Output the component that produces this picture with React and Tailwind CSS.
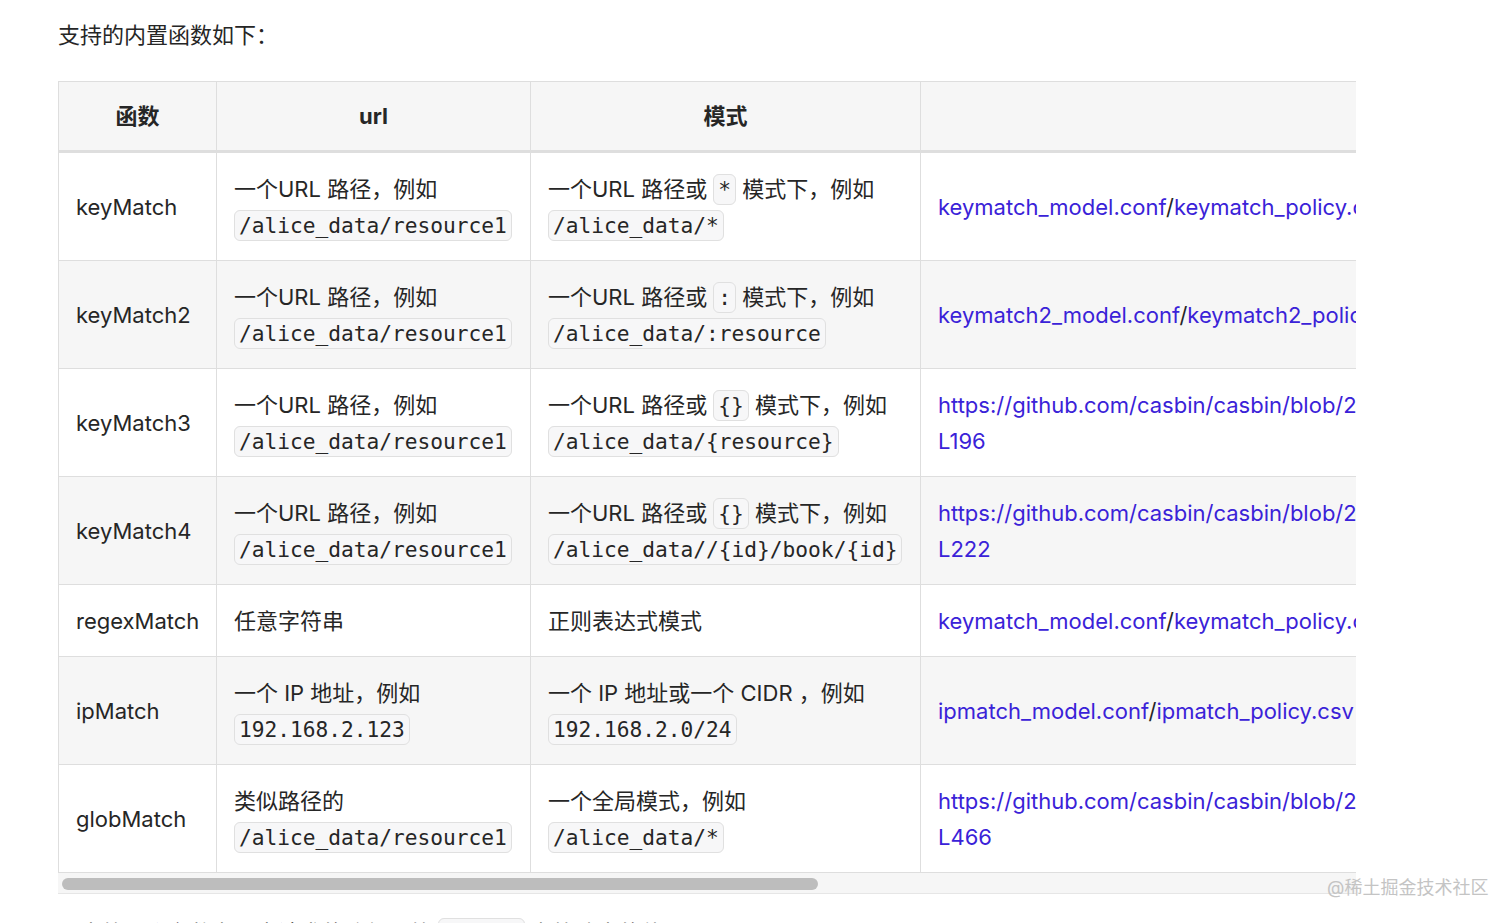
import React from 'react';

const body = { fontFamily: 'Inter, "Noto Sans CJK SC", sans-serif' };
const mono = { fontFamily: '"DejaVu Sans Mono", "Liberation Mono", monospace' };

const Code = ({ children }) => (
  <code
    style={mono}
    className="rounded-[6px] border border-[#e0e0e0] bg-[#f7f7f8] px-[4px] py-[2px] text-[21.2px] leading-none text-[#262626]"
  >
    {children}
  </code>
);

const A = ({ children }) => <a className="text-[#3a22d8]">{children}</a>;

const Pair = ({ a, b }) => (
  <span className="whitespace-nowrap">
    <A>{a}</A>/<A>{b}</A>
  </span>
);

const Gh = ({ line }) => (
  <span className="whitespace-nowrap">
    <A>https://github.com/casbin/casbin/blob/277c1a2b85698272f764d71a94d2595a8d425915/util/builtin_operators.go#</A>
    <br />
    <A>{line}</A>
  </span>
);

const rows = [
  {
    name: 'keyMatch',
    url: <>一个URL 路径，例如<br /><Code>/alice_data/resource1</Code></>,
    mode: <>一个URL 路径或 <Code>*</Code> 模式下，例如<br /><Code>/alice_data/*</Code></>,
    demo: <Pair a="keymatch_model.conf" b="keymatch_policy.csv" />,
  },
  {
    name: 'keyMatch2',
    url: <>一个URL 路径，例如<br /><Code>/alice_data/resource1</Code></>,
    mode: <>一个URL 路径或 <Code>:</Code> 模式下，例如<br /><Code>/alice_data/:resource</Code></>,
    demo: <Pair a="keymatch2_model.conf" b="keymatch2_policy.csv" />,
  },
  {
    name: 'keyMatch3',
    url: <>一个URL 路径，例如<br /><Code>/alice_data/resource1</Code></>,
    mode: <>一个URL 路径或 <Code>{'{}'}</Code> 模式下，例如<br /><Code>{'/alice_data/{resource}'}</Code></>,
    demo: <Gh line="L196" />,
  },
  {
    name: 'keyMatch4',
    url: <>一个URL 路径，例如<br /><Code>/alice_data/resource1</Code></>,
    mode: <>一个URL 路径或 <Code>{'{}'}</Code> 模式下，例如<br /><Code>{'/alice_data//{id}/book/{id}'}</Code></>,
    demo: <Gh line="L222" />,
  },
  {
    name: 'regexMatch',
    url: <>任意字符串</>,
    mode: <>正则表达式模式</>,
    demo: <Pair a="keymatch_model.conf" b="keymatch_policy.csv" />,
  },
  {
    name: 'ipMatch',
    url: <>一个 IP 地址，例如<br /><Code>192.168.2.123</Code></>,
    mode: <>一个 IP 地址或一个 CIDR ，例如<br /><Code>192.168.2.0/24</Code></>,
    demo: <Pair a="ipmatch_model.conf" b="ipmatch_policy.csv" />,
  },
  {
    name: 'globMatch',
    url: <>类似路径的<br /><Code>/alice_data/resource1</Code></>,
    mode: <>一个全局模式，例如<br /><Code>/alice_data/*</Code></>,
    demo: <Gh line="L466" />,
  },
];

const td = 'border border-[#dedede] px-[17px] align-middle';

export default function App() {
  return (
    <div style={body} className="relative h-[923px] overflow-hidden bg-white text-[22px] leading-[36px] text-[#262626]">
      <p className="ml-[58px] pt-[17px]">支持的内置函数如下：</p>

      <div className="ml-[58px] mt-[28px] w-[1298px]">
        <div className="overflow-hidden">
          <table className="w-[2222px] table-fixed border-collapse">
            <colgroup>
              <col className="w-[158px]" />
              <col className="w-[314px]" />
              <col className="w-[390px]" />
              <col className="w-[1360px]" />
            </colgroup>
            <thead>
              <tr className="bg-[#f6f6f6]">
                {['函数', 'url', '模式', '示例'].map((h) => (
                  <th key={h} className={`${td} border-b-[3px] py-[16px] text-center font-bold`}>
                    {h}
                  </th>
                ))}
              </tr>
            </thead>
            <tbody>
              {rows.map((r, i) => (
                <tr key={r.name} className={i % 2 === 1 ? 'bg-[#f6f6f6]' : 'bg-white'}>
                  <td className={`${td} py-[17.5px]`}>{r.name}</td>
                  <td className={`${td} py-[17.5px]`}>{r.url}</td>
                  <td className={`${td} py-[17.5px]`}>{r.mode}</td>
                  <td className={`${td} py-[17.5px]`}>{r.demo}</td>
                </tr>
              ))}
            </tbody>
          </table>
        </div>
        {/* horizontal scrollbar */}
        <div className="h-[21px] border-b border-[#e6e6e6] bg-[#f6f6f6] pl-[4px] pt-[5px]">
          <div className="h-[12px] w-[756px] rounded-full bg-[#bdbdbd]" />
        </div>
      </div>

      <p className="ml-[58px] mt-[21px] whitespace-nowrap">
        其中第一个参数为用户请求的路径，第 <Code>params</Code> 为策略中的值
      </p>

      <div className="absolute left-[1327px] top-[876px] text-[18px] leading-[24px] text-[#c4c4c4]">
        @稀土掘金技术社区
      </div>
    </div>
  );
}
